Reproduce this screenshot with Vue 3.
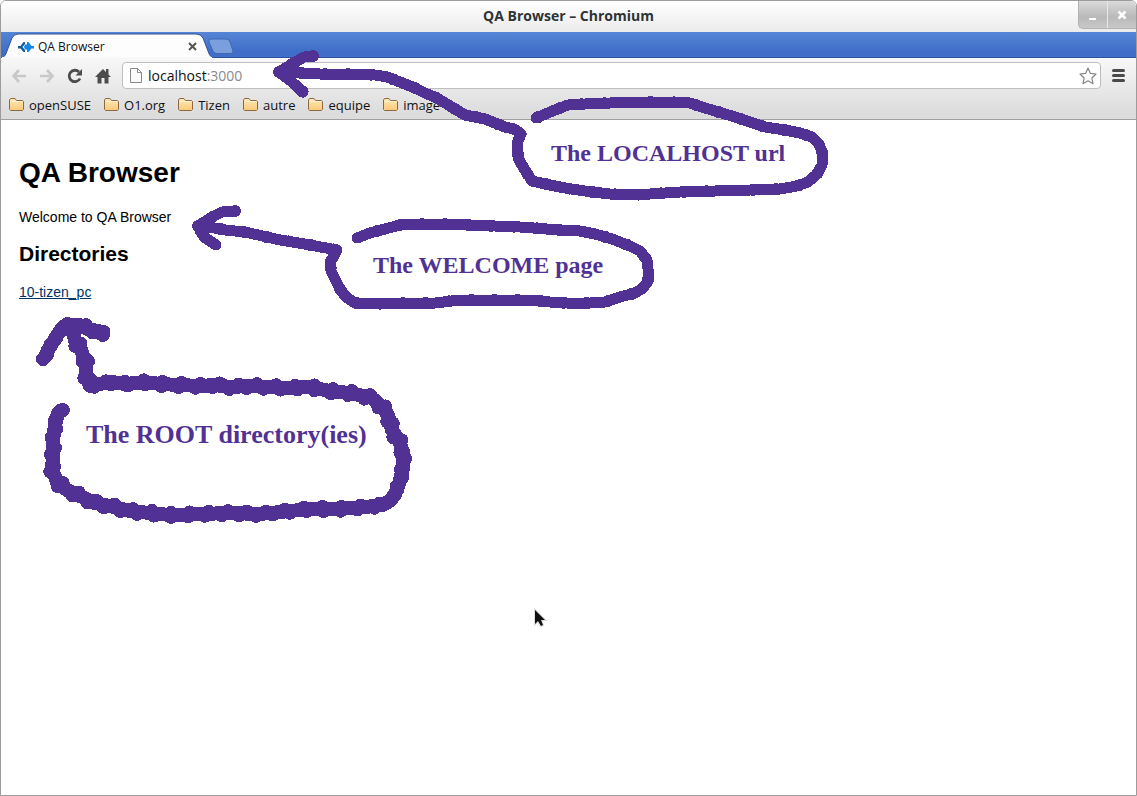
<script setup>
import { ref } from 'vue'

const url = ref('localhost:3000')
const bookmarks = ['openSUSE', 'O1.org', 'Tizen', 'autre', 'equipe', 'image']

const thinStrokes = [
  'M313 56L304 57L292 64L279 72L292 82L303 92',
  'M279 72L300 73L320 74L360 74L375 75L387 77L400 82L415 88L425 93L437 98L450 106L465 115L485 119L505 127L514 129L521 134L517 143L517 150L519 160L525 170L532 181L550 185L565 188L585 191L610 194L630 195L650 194L680 192L750 190L780 189L797 186L808 182L817 174L822 165L822 152L819 144L812 137L800 133L785 130L765 127L735 117L705 108L690 103L665 102L645 102L610 103L585 104L568 105L555 110L536 118',
  'M235 211L222 212L212 217L198 226L204 237L216 245',
  'M198 226L215 228L225 230L245 232L280 240L310 245L337 250L334 256L330 262L331 271L335 279L340 289L346 297L355 303L390 304L405 303L435 303L460 300L530 300L550 302L567 303L590 303L605 302L620 297L635 293L643 288L648 281L648 269L647 260L640 251L630 246L612 239L595 234L580 231L560 230L520 227L470 225L440 224L415 224L400 225L385 229L370 233L357 238',
]
const thickStrokes = [
  'M45 357L48 350L53 342L58 334L64 326L79 325L88 329L98 331L103 335',
  'M72 328L75 340L81 350L86 363L86 375L90 386L100 384L112 382L125 384L145 382L160 384L180 385L200 386L215 385L230 387L250 386L270 387L290 388L310 387L330 391L350 393L372 398L382 407L388 415L392 430L399 441L403 452L403 468L400 480L397 490L391 500L383 505L365 507L340 509L310 509L280 512L260 514L230 513L200 514L170 515L150 513L130 511L110 506L95 503L80 496L67 490L57 482L52 469L53 455L53 440L55 425L58 413L63 410',
]
</script>

<template>
  <div class="window">
    <header class="titlebar">
      <h1 class="title">QA Browser – Chromium</h1>
      <div class="controls">
        <button aria-label="Minimize"><svg width="10" height="12"><path d="M1 10h7" stroke="#fff" stroke-width="2" /></svg></button>
        <button aria-label="Close"><svg width="10" height="12"><path d="M1.500 2.500l7 7M8.500 2.500l-7 7" stroke="#fff" stroke-width="2.600" /></svg></button>
      </div>
    </header>

    <div class="tabstrip">
      <div class="tab">
        <svg class="tab-shape" width="213" height="26" viewBox="0 0 213 26">
          <path d="M0 26C4 25 5 22 6 19L11 6Q13 2 17 2H195Q200 2 202 6L207 19C208 22 209 25 213 26Z" fill="#fdfdfd" stroke="#35549a" />
          <path d="M1 25.500H211" stroke="#f9f9f9" />
        </svg>
        <svg class="favicon" width="16" height="12" viewBox="0 0 16 12">
          <path d="M5.500 1H7V3L4.500 6L7 9V11H5.500L2.500 7.500H0V5H2.500Z" fill="#165c9c" />
          <path d="M9 1L10.500 1L13.500 5H16V7.500H13.500L10.500 11L9 11V8.500H7L6 6L7 3.500H9Z" fill="#1186e8" />
        </svg>
        <span class="tab-title">QA Browser</span>
        <button class="tab-close" aria-label="Close tab"><svg width="9" height="9"><path d="M1 1l7 7M8 1l-7 7" stroke="#555" stroke-width="2" /></svg></button>
      </div>
      <button class="new-tab" aria-label="New tab">
        <svg width="26" height="17"><path d="M3 1H18Q21 1 22 4L25 13Q25 15.500 23 15.500H9Q6 15.500 5 13L1 4Q0 1 3 1Z" fill="#7b9fdc" stroke="#4168b2" /></svg>
      </button>
    </div>

    <div class="chrome">
      <nav class="toolbar">
        <button aria-label="Back"><svg width="16" height="16"><path d="M15 8H3M8 2L2.500 8L8 14" fill="none" stroke="#c8c8c8" stroke-width="2.600" /></svg></button>
        <button aria-label="Forward"><svg width="16" height="16"><path d="M1 8H13M8 2L13.500 8L8 14" fill="none" stroke="#c8c8c8" stroke-width="2.600" /></svg></button>
        <button aria-label="Reload"><svg width="16" height="16"><path d="M13 10.500A5.700 5.700 0 1 1 12 4" fill="none" stroke="#4c4c4c" stroke-width="2.800" /><path d="M15 1V7.500H8.500Z" fill="#4c4c4c" /></svg></button>
        <button aria-label="Home"><svg width="16" height="16"><path d="M8 1L0 9H2.500V15.500H6.500V10H9.500V15.500H13.500V9H16L13.500 6.500V1H11V4Z" fill="#4c4c4c" /></svg></button>
        <div class="omnibox">
          <svg width="12" height="15"><path d="M.5.500H7.500L11.500 4.500V14.500H.5ZM7.500.500V4.500H11.500" fill="#fafafa" stroke="#888" /></svg>
          <label class="url">
            <input v-model="url" aria-label="Address" />
            <span class="url-text" aria-hidden="true">localhost<i>:3000</i></span>
          </label>
          <button class="star" aria-label="Bookmark this page"><svg width="18" height="18" viewBox="0 0 18 18"><path d="M9 1L11.300 6.300L17 7L12.800 11L14 16.700L9 13.800L4 16.700L5.200 11L1 7L6.700 6.300Z" fill="#fff" stroke="#858585" stroke-width="1.200" stroke-linejoin="round" /></svg></button>
        </div>
        <button class="menu" aria-label="Menu"><svg width="13" height="13"><path d="M1.500 1.500H11.500M1.500 6.500H11.500M1.500 11.500H11.500" stroke="#4a4a4a" stroke-width="3" stroke-linecap="round" /></svg></button>
      </nav>
      <nav class="bookmarks">
        <a v-for="name in bookmarks" :key="name" href="#">
          <svg width="15" height="13"><defs><linearGradient id="folder" x2="0" y2="1"><stop stop-color="#ffeab8" /><stop offset="1" stop-color="#fbc878" /></linearGradient></defs><path d="M.5 11.500V2L1.500.500H6L7.500 2.500H13.500L14.500 3.500V11.500L13.500 12.500H1.500Z" fill="url(#folder)" stroke="#8d6844" /><path d="M2 3.500H13" stroke="#fff3d5" /></svg>
          {{ name }}
        </a>
      </nav>
    </div>

    <main class="page">
      <h2>QA Browser</h2>
      <p>Welcome to QA Browser</p>
      <h3>Directories</h3>
      <a href="#">10-tizen_pc</a>
    </main>

    <svg class="notes" width="840" height="640" viewBox="0 0 840 640">
      <g class="ink" stroke-width="11">
        <path v-for="d in thinStrokes" :key="d" :d="d" />
        <path v-for="d in thinStrokes" :key="d + 'dots'" :d="d" stroke-width="12" stroke-dasharray="0 23" />
      </g>
      <g class="ink" stroke-width="14">
        <g v-for="d in thickStrokes" :key="d">
          <path :d="d" />
          <path :d="d" stroke-dasharray="0 19" transform="translate(2 -2)" />
          <path :d="d" stroke-dasharray="0 17" transform="translate(-2 2)" />
        </g>
      </g>
      <g class="captions">
        <text x="551" y="161">The LOCALHOST url</text>
        <text x="373" y="273">The WELCOME page</text>
        <text x="86" y="443" class="wide">The ROOT directory(ies)</text>
      </g>
      <path d="M535 610V624L538 621L541 626L543 625L541 620H545Z" fill="#111" stroke="#ddd" stroke-width="2" paint-order="stroke" />
    </svg>
  </div>
</template>

<style>
body { background: #fff; }
</style>

<style scoped>
* { box-sizing: border-box; }
.window {
  position: relative;
  min-height: 100vh;
  border: 1px solid #9c9c9c;
  border-radius: 6px 6px 0 0;
  overflow: hidden;
  background: #fff;
  font: 13px/18px "Open Sans", "Noto Sans", sans-serif;
  color: #111;
}
button { padding: 0; border: 0; background: none; display: flex; align-items: center; justify-content: center; }
svg { display: block; flex: none; }
.titlebar {
  display: grid;
  grid-template-columns: 58px 1fr 58px;
  height: 31px;
  background: linear-gradient(#fff, #ebebeb);
}
.title {
  grid-column: 2;
  margin: 0;
  text-align: center;
  font-family: "Open Sans", "Noto Sans", sans-serif;
  font-size: 14px;
  line-height: 30px;
  font-weight: 700;
  color: #2e3436;
}
.controls {
  display: flex;
  height: 28px;
  border: solid #b2b2b2;
  border-width: 0 0 1px 1px;
  border-radius: 0 0 0 5px;
  background: linear-gradient(#dadada, #b9b9b9 60%, #c9c9c9);
}
.controls button { flex: 1; }
.controls button + button { border-left: 1px solid #e8e8e8; }
.tabstrip {
  display: flex;
  height: 26px;
  background: linear-gradient(#5585d6, #3f6dc7 80%);
  border-bottom: 1px solid #2e519e;
}
.tab {
  position: relative;
  display: flex;
  align-items: center;
  width: 206px;
  height: 26px;
  padding: 3px 10px 0 17px;
  gap: 4px;
  font-size: 12px;
}
.tab > * { position: relative; }
.tab > .tab-shape { position: absolute; left: 0; top: 0; }
.tab-title { flex: 1; }
.new-tab { width: 28px; height: 26px; padding-top: 2px; }
.chrome { background: linear-gradient(#f8f8f8, #dcdcdc 90%); border-bottom: 1px solid #a0a0a0; }
.toolbar { display: flex; align-items: center; height: 35px; padding: 0 11px 0 10px; gap: 12px; }
.omnibox {
  flex: 1;
  display: flex;
  align-items: center;
  height: 27px;
  margin-right: -1px;
  margin-left: -1px;
  padding: 0 3px 0 7px;
  border: 1px solid #bebebe;
  border-radius: 4px;
  background: #fff;
}
.url { position: relative; flex: 1; margin-left: 6px; font-size: 14px; line-height: 20px; }
.url input { display: block; width: 100%; height: 20px; padding: 0; border: 0; outline: 0; background: none; font: inherit; color: transparent; }
.url-text { position: absolute; left: 0; top: 0; pointer-events: none; }
.url-text i { font-style: normal; color: #8a8a8a; }
.bookmarks { display: flex; gap: 13px; height: 26px; padding: 0 8px 3px; align-items: center; }
.bookmarks a { display: flex; align-items: center; gap: 5px; color: #111; text-decoration: none; }
.page { padding: 37px 18px; font: 14px/18px "Liberation Sans", Arial, sans-serif; color: #000; }
.page h2 { margin: 0; font-size: 28px; line-height: 32px; }
.page p { margin: 19px 0 16px; }
.page h3 { margin: 0 0 17px; font-size: 21px; line-height: 24px; }
.page a { color: #003366; }
.notes { position: absolute; left: -1px; top: -1px; pointer-events: none; }
.ink { fill: none; stroke: #523194; stroke-linecap: round; stroke-linejoin: round; shape-rendering: crispEdges; }
.captions { font: bold 24px "Liberation Serif", "Times New Roman", serif; fill: #523194; }
.captions .wide { font-size: 26px; }
</style>
